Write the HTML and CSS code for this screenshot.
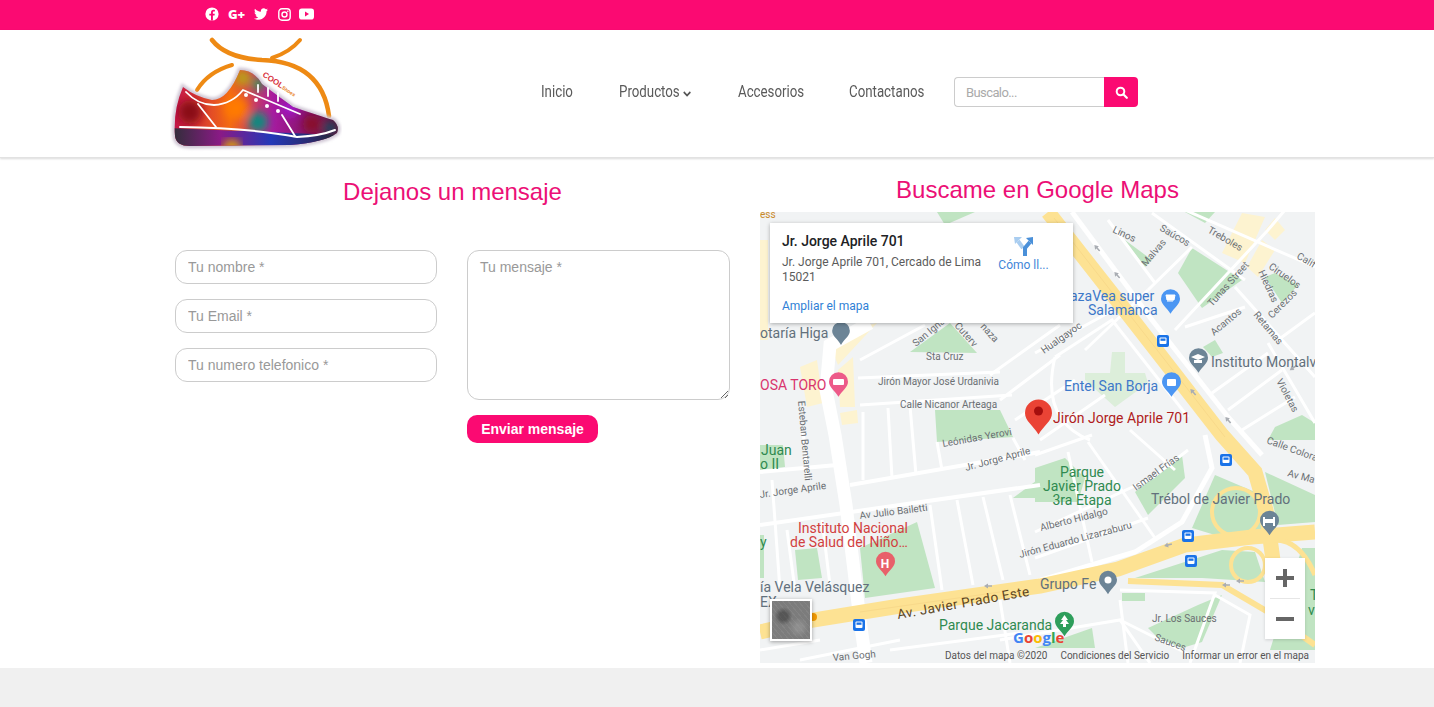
FILE: index.html
```html
<!DOCTYPE html>
<html lang="en">
<head>
    <meta charset="UTF-8">
    <meta name="viewport" content="width=device-width, initial-scale=1.0">
    <title>Contactanos</title>
    <link rel="stylesheet" href="styles.css">
</head>
<body>
    <!-- Top bar -->
    <div class="topbar">
        <svg class="social" width="14" height="14" viewBox="0 0 14 14"><circle cx="7" cy="7" r="6.6" fill="#fff"/><path d="M7.9 13.6V8.6h1.6l.3-1.9H7.9V5.5c0-.6.3-1 1-1h1V2.9c-.4-.1-.9-.1-1.400-.1-1.500 0-2.500.9-2.500 2.500v1.400H4.300v1.900H6v5z" fill="#fb0a72"/></svg>
        <span class="gplus">G+</span>
        <svg class="social" width="14" height="14" viewBox="0 0 512 512"><path fill="#fff" d="M459.37 151.716c.325 4.548.325 9.097.325 13.645 0 138.72-105.583 298.558-298.558 298.558-59.452 0-114.68-17.219-161.137-47.106 8.447.974 16.568 1.299 25.34 1.299 49.055 0 94.213-16.568 130.274-44.832-46.132-.975-84.792-31.188-98.112-72.772 6.498.974 12.995 1.624 19.818 1.624 9.421 0 18.843-1.3 27.614-3.573-48.081-9.747-84.143-51.98-84.143-102.985v-1.299c13.969 7.797 30.214 12.67 47.431 13.319-28.264-18.843-46.781-51.005-46.781-87.391 0-19.492 5.197-37.36 14.294-52.954 51.655 63.675 129.3 105.258 216.365 109.807-1.624-7.797-2.599-15.918-2.599-24.04 0-57.828 46.782-104.934 104.934-104.934 30.213 0 57.502 12.67 76.67 33.137 23.715-4.548 46.456-13.32 66.599-25.34-7.798 24.366-24.366 44.833-46.132 57.827 21.117-2.273 41.584-8.122 60.426-16.243-14.292 20.791-32.161 39.308-52.628 54.253z"/></svg>
        <svg class="social" width="13" height="13" viewBox="0 0 13 13"><rect x=".8" y=".8" width="11.400" height="11.400" rx="3.200" fill="none" stroke="#fff" stroke-width="1.400"/><circle cx="6.500" cy="6.500" r="2.500" fill="none" stroke="#fff" stroke-width="1.400"/><circle cx="9.800" cy="3.200" r=".8" fill="#fff"/></svg>
        <svg class="social yt" width="15" height="12" viewBox="0 0 15 12"><rect y=".5" width="15" height="11" rx="2.800" fill="#fff"/><path d="M6 3.500v5l4-2.500z" fill="#fb0a72"/></svg>
    </div>

    <!-- Header -->
    <header class="header">
        <svg class="logo" width="172" height="118" viewBox="170 35 172 118">
            <defs>
                <linearGradient id="shoeBase" x1="0" y1="0" x2="1" y2="0">
                    <stop offset="0" stop-color="#c00d50"/>
                    <stop offset=".35" stop-color="#f36a12"/>
                    <stop offset=".6" stop-color="#a81aa0"/>
                    <stop offset="1" stop-color="#5f1030"/>
                </linearGradient>
                <linearGradient id="soleBase" x1="0" y1="0" x2="1" y2="0">
                    <stop offset="0" stop-color="#2b2f34"/>
                    <stop offset=".3" stop-color="#8a1a86"/>
                    <stop offset=".6" stop-color="#2438b8"/>
                    <stop offset=".85" stop-color="#2a2a6a"/>
                    <stop offset="1" stop-color="#25282f"/>
                </linearGradient>
                <filter id="soft"><feGaussianBlur stdDeviation="4"/></filter>
                <filter id="halo"><feGaussianBlur stdDeviation="1.500"/></filter>
                <clipPath id="shoeClip"><path d="M183 87Q196 97 212 100Q228 100 240 70Q254 70 262 84L293 107Q320 116 333 120Q340 126 337 133Q325 142 290 145L190 146Q176 146 175 136Q173 110 183 87Z"/></clipPath>
            </defs>
            <g fill="none" stroke="#ee8a14" stroke-linecap="round">
                <path d="M212 40Q226 58 262 60Q322 62 329 116" stroke-width="4.500"/>
                <path d="M300 40Q290 52 272 58" stroke-width="4"/>
                <path d="M232 65Q208 72 197 90" stroke-width="4"/>
            </g>
            <path d="M183 87Q196 97 212 100Q228 100 240 70Q254 70 262 84L293 107Q320 116 333 120Q340 126 337 133Q325 142 290 145L190 146Q176 146 175 136Q173 110 183 87Z" fill="none" stroke="#cfc6d4" stroke-width="5" filter="url(#halo)"/>
            <g clip-path="url(#shoeClip)">
                <rect x="170" y="65" width="172" height="85" fill="url(#shoeBase)"/>
                <g filter="url(#soft)">
                    <circle cx="190" cy="112" r="12" fill="#8a0a12"/>
                    <circle cx="236" cy="108" r="12" fill="#ff7a00"/>
                    <circle cx="243" cy="78" r="8" fill="#b7a012"/>
                    <circle cx="258" cy="84" r="6" fill="#22a050"/>
                    <circle cx="258" cy="122" r="10" fill="#0e8a80"/>
                    <circle cx="290" cy="108" r="9" fill="#a012c8"/>
                    <circle cx="312" cy="124" r="9" fill="#8a0e2a"/>
                    <circle cx="330" cy="128" r="7" fill="#1c4a60"/>
                </g>
                <path d="M170 128L338 135V150H170Z" fill="url(#soleBase)"/>
                <circle cx="232" cy="148" r="9" fill="#d89a10" filter="url(#soft)"/>
            </g>
            <g fill="none" stroke="#fff" stroke-width="1.800" stroke-linecap="round">
                <path d="M180 127Q250 128 297 137Q320 136 335 130" stroke-width="2"/>
                <path d="M186 92Q198 105 214 105Q232 104 243 90L300 114"/>
                <path d="M198 104L216 127M282 115L295 136M258 92V85M268 96V88M278 101V93"/>
            </g>
            <g fill="#fff"><circle cx="246" cy="95" r="2"/><circle cx="256" cy="100" r="2"/><circle cx="267" cy="106" r="2"/><circle cx="278" cy="111" r="2"/></g>
            <text class="logo-cool" transform="translate(262 76) rotate(33)">COOL<tspan class="logo-shoes">Shoes</tspan></text>
        </svg>
        <nav class="nav">
            <a href="#">Inicio</a>
            <a href="#">Productos <svg width="10" height="6" viewBox="0 0 10 6"><path d="M1 1l4 3.500L9 1" fill="none" stroke="#555" stroke-width="1.800"/></svg></a>
            <a href="#">Accesorios</a>
            <a href="#">Contactanos</a>
        </nav>
        <form class="search">
            <input type="text" placeholder="Buscalo...">
            <button type="button"><svg width="13" height="13" viewBox="0 0 13 13"><circle cx="5.500" cy="5.500" r="3.800" fill="none" stroke="#fff" stroke-width="2"/><path d="M8.500 8.500l3.300 3.300" stroke="#fff" stroke-width="2.200" stroke-linecap="round"/></svg></button>
        </form>
    </header>

    <!-- Content -->
    <main class="content">
        <section class="message">
            <h2>Dejanos un mensaje</h2>
            <form class="contact-form">
                <div class="fields">
                    <input type="text" placeholder="Tu nombre *">
                    <input type="text" placeholder="Tu Email *">
                    <input type="text" placeholder="Tu numero telefonico *">
                </div>
                <div class="text-side">
                    <textarea placeholder="Tu mensaje *"></textarea>
                    <button type="button" class="send-btn">Enviar mensaje</button>
                </div>
            </form>
        </section>

        <section class="location">
            <h2>Buscame en Google Maps</h2>
            <div class="map">
                <svg class="map-canvas" width="555" height="451" viewBox="760 212 555 451">
                    <defs>
                        <symbol id="pin" viewBox="0 0 20 26" overflow="visible"><path d="M10 0a10 10 0 0 1 10 10c0 6-6 9-10 16C6 19 0 16 0 10A10 10 0 0 1 10 0z"/></symbol>
                        <g id="bus"><rect x="-6" y="-6" width="12" height="12" rx="2" fill="#1a73e8"/><rect x="-3.500" y="-3.500" width="7" height="6.500" rx="1" fill="#fff"/><rect x="-2.500" y="-2.500" width="5" height="2.300" fill="#1a73e8"/></g>
                        <path id="arrow" d="M-4 0L0 -2.500V-.8H4V.8H0V2.500Z" fill="#a9adb3"/>
                    </defs>
                    <rect x="760" y="212" width="555" height="451" fill="#f1f3f4"/>

                    <!-- parks -->
                    <g fill="#c0e4c2">
                        <path d="M1178 273L1192 248L1242 280L1202 308Z"/>
                        <path d="M1125 240L1152 260L1145 267Z"/>
                        <path d="M1265 277L1275 273L1298 285L1282 303Z"/>
                        <path d="M1203 347L1215 340L1223 353L1212 357Z"/>
                        <path d="M1275 427L1302 415L1315 423V440H1268Z"/>
                        <path d="M1185 212H1215L1205 223Z"/>
                        <path d="M910 352L950 323L977 353Z"/>
                        <path d="M935 410H1000L1013 437L937 442Z"/>
                        <path d="M860 548L917 522L935 588L865 598Z"/>
                        <path d="M795 550L817 548L822 578L798 580Z"/>
                        <path d="M760 445H783L785 467L760 470Z"/>
                        <path d="M760 535H764V578H760Z"/>
                        <path d="M1013 498L1040 478V498Z"/>
                        <path d="M1035 468L1065 458L1085 478L1078 502H1035Z"/>
                        <path d="M1135 492L1182 455L1185 478L1148 515Z"/>
                        <path d="M1192 528L1215 475L1255 492L1262 532L1215 535Z"/>
                        <path d="M1265 472L1315 495V522L1278 525Z"/>
                        <path d="M1135 578L1222 550L1255 552L1265 582L1202 578Z"/>
                        <path d="M1122 593H1145V601H1122Z"/>
                        <path d="M1148 628L1198 605L1222 595L1202 642L1182 648L1158 638Z"/>
                        <path d="M1035 648L1092 628L1095 648Z"/>
                        <path d="M1302 548H1315V650H1270Z"/>
                        <path d="M937 212H975L945 225Z"/>
                    </g>
                    <path d="M1112 352H1125V373H1145L1148 383L1115 407L1085 380V373H1110Z" fill="#dceeda"/>
                    <g fill="#fdf3d0">
                        <path d="M1222 253L1242 213L1265 217L1245 263Z"/>
                        <path d="M1265 230L1275 218L1285 230L1275 240Z"/>
                        <path d="M1247 267L1262 240L1275 250L1258 277Z"/>
                        <path d="M832 350L860 327L877 323L838 365Z"/>
                        <path d="M800 367L817 360L823 403L807 407Z"/>
                        <path d="M838 370L853 357L855 407L840 407Z"/>
                        <path d="M840 413L857 410L858 423L842 425Z"/>
                        <path d="M760 240H768V340H760Z"/>
                    </g>

                    <!-- streets -->
                    <g fill="none" stroke="#fff" stroke-width="3">
                        <path d="M1072 212L1152 320L1228 417L1262 455" stroke-width="5"/>
                        <path d="M1108 220L1155 283M1152 213L1245 280M1185 210L1315 267M1175 330L1268 230L1285 210"/>
                        <path d="M1148 290L1192 247M1235 287L1315 377M1185 327L1245 307M1268 343L1315 423"/>
                        <path d="M1212 393L1268 353M1228 410L1282 370M1242 430L1295 397M1278 340L1315 313"/>
                        <path d="M1035 353L1108 313M1055 357L1112 320L1188 417M1148 290L1085 350"/>
                        <path d="M1205 435L1212 468L1182 522L1135 552L1035 582" stroke-width="5"/>
                        <path d="M1035 455L1092 435M1088 442L1155 538M1068 452L1092 562M1035 532L1152 478M1035 558L1148 518M1152 478L1188 450"/>
                        <path d="M1055 357Q1040 420 1090 440M1015 420L1075 380M1040 440L1105 395M1130 430L1175 470"/>
                        <path d="M860 360L925 325M990 375L1060 325M1000 400L1060 355"/>
                        <path d="M858 378L1000 372M860 405L1012 395"/>
                        <path d="M760 525L1040 485M760 472L837 465M850 485L1040 452" stroke-width="4"/>
                        <path d="M863 412V480M888 408L892 478M910 406L916 475M937 442L942 470M1013 438L1025 460"/>
                        <path d="M930 505L942 590M957 500L973 585M983 497L1003 580M1010 495L1030 575"/>
                        <path d="M803 430L808 480M772 480L780 590M787 530L795 590M822 520L830 585"/>
                        <path d="M760 650L820 640M890 650L1020 633M800 660L900 640M1000 600L1010 663"/>
                        <path d="M1120 590L1215 593L1190 663M1000 640L1120 620L1150 663M1120 600L1128 663M1120 620L1190 655M1215 595L1250 615L1240 663"/>
                    </g>
                    <path d="M870 323L830 345L826 390L835 435L846 505L860 620L866 663" fill="none" stroke="#fff" stroke-width="13"/>

                    <!-- main avenues -->
                    <g fill="none" stroke="#fde293" stroke-linecap="butt">
                        <path d="M1048 212L1135 323L1222 435L1255 472L1266 510L1273 560" stroke-width="15"/>
                        <path d="M760 632L813 620L900 606L1040 586L1118 569L1185 545L1252 537L1315 532" stroke-width="15"/>
                        <path d="M1128 581L1222 585L1268 612L1315 645" stroke-width="6"/>
                        <circle cx="1236" cy="512" r="24" stroke-width="4"/>
                        <circle cx="1248" cy="565" r="17" stroke-width="4"/>
                        <path d="M1275 540Q1300 540 1315 575" stroke-width="5"/>
                    </g>
                    <path d="M1054 218L1225 437M860 612L1000 592" fill="none" stroke="#f8d98a" stroke-width="1"/>
                    <circle cx="813" cy="617" r="4" fill="#f29900"/>

                    <use href="#arrow" transform="translate(1097 248) rotate(48)"/>
                    <use href="#arrow" transform="translate(1117 275) rotate(48)"/>
                    <use href="#arrow" transform="translate(1193 392) rotate(48)"/>
                    <use href="#arrow" transform="translate(1228 420) rotate(48)"/>
                    <use href="#arrow" transform="translate(988 586)"/>
                    <use href="#arrow" transform="translate(1168 545) rotate(-15)"/>
                    <use href="#arrow" transform="translate(1240 581)"/>
                    <use href="#arrow" transform="translate(1226 585)"/>
                    <use href="#arrow" transform="translate(1293 368) rotate(-35)"/>

                    <!-- street labels -->
                    <g class="st">
                        <text x="878" y="385">Jirón Mayor José Urdanivia</text>
                        <text x="900" y="408">Calle Nicanor Arteaga</text>
                        <text x="926" y="360">Sta Cruz</text>
                        <text transform="translate(916 347) rotate(-40)">San Igna</text>
                        <text transform="translate(954 326) rotate(48)">Cuterv</text>
                        <text transform="translate(980 327) rotate(48)">naza</text>
                        <text transform="translate(1044 354) rotate(-35)">Hualgayoc</text>
                        <text transform="translate(1112 232) rotate(25)">Linos</text>
                        <text transform="translate(1146 267) rotate(-50)">Malvas</text>
                        <text transform="translate(1159 230) rotate(30)">Saúcos</text>
                        <text transform="translate(1207 232) rotate(30)">Treboles</text>
                        <text transform="translate(1212 307) rotate(-48)">Tunas Street</text>
                        <text transform="translate(1268 268) rotate(35)">Ciruelos</text>
                        <text transform="translate(1258 272) rotate(65)">Hiedras</text>
                        <text transform="translate(1272 319) rotate(-45)">Cerezos</text>
                        <text transform="translate(1296 258) rotate(30)">Calif</text>
                        <text transform="translate(1253 315) rotate(50)">Retamas</text>
                        <text transform="translate(1214 336) rotate(-40)">Acantos</text>
                        <text transform="translate(1276 381) rotate(62)">Violetas</text>
                        <text transform="translate(1266 443) rotate(20)">Calle Colora</text>
                        <text transform="translate(1287 476) rotate(15)">Av Ma</text>
                        <text transform="translate(943 447) rotate(-10)">Leónidas Yerovi</text>
                        <text transform="translate(966 471) rotate(-15)">Jr. Jorge Aprile</text>
                        <text transform="translate(760 498) rotate(-8)">Jr. Jorge Aprile</text>
                        <text transform="translate(798 401) rotate(85)">Esteban Bentarelli</text>
                        <text transform="translate(860 519) rotate(-7)">Av Julio Bailetti</text>
                        <text transform="translate(1136 491) rotate(-36)">Ismael Frías</text>
                        <text transform="translate(1041 531) rotate(-14)">Alberto Hidalgo</text>
                        <text transform="translate(1020 558) rotate(-15)">Jirón Eduardo Lizarzaburu</text>
                        <text transform="translate(833 661) rotate(-5)">Van Gogh</text>
                        <text x="1152" y="622">Jr. Los Sauces</text>
                        <text transform="translate(1154 640) rotate(20)">Sauces</text>
                    </g>

                    <!-- places -->
                    <g class="poi poi-gray">
                        <text x="760" y="338">otaría Higa</text>
                        <text x="1211" y="367">Instituto Montalv</text>
                        <text x="1151" y="504">Trébol de Javier Prado</text>
                        <text x="760" y="592">ía Vela Velásquez</text>
                        <text x="760" y="607">EX</text>
                        <text x="1040" y="589">Grupo Fe</text>
                    </g>
                    <g class="poi poi-blue">
                        <text x="1070" y="301">azaVea super</text>
                        <text x="1088" y="315">Salamanca</text>
                        <text x="1064" y="391">Entel San Borja</text>
                    </g>
                    <g class="poi poi-green">
                        <text x="1082" y="477" text-anchor="middle">Parque</text>
                        <text x="1082" y="491" text-anchor="middle">Javier Prado</text>
                        <text x="1082" y="505" text-anchor="middle">3ra Etapa</text>
                        <text x="939" y="630">Parque Jacaranda</text>
                        <text x="761" y="455">Juan</text>
                        <text x="760" y="469">o II</text>
                        <text x="760" y="547">y</text>
                        <text x="1310" y="600">T</text>
                        <text x="1308" y="615">vi</text>
                    </g>
                    <g class="poi poi-red">
                        <text x="853" y="533" text-anchor="middle">Instituto Nacional</text>
                        <text x="849" y="547" text-anchor="middle">de Salud del Niño…</text>
                    </g>
                    <text class="poi poi-pink" x="760" y="390">OSA TORO</text>
                    <text class="poi poi-dark" x="1053" y="423">Jirón Jorge Aprile 701</text>
                    <text class="poi poi-road" transform="translate(898 619) rotate(-10)">Av. Javier Prado Este</text>
                    <text class="st poi-orange" x="760" y="218">ess</text>

                    <!-- pins -->
                    <use href="#pin" x="832" y="322" width="18" height="23" fill="#6c8496"/>
                    <use href="#pin" x="829" y="372" width="19" height="25" fill="#ed5a89"/>
                    <rect x="833" y="379" width="11" height="6" rx="1" fill="#fff"/>
                    <use href="#pin" x="1161" y="289" width="19" height="25" fill="#4b96f3"/>
                    <path d="M1166 295h9l-1 5h-7zM1167 301h6" fill="#fff" stroke="#fff"/>
                    <use href="#pin" x="1162" y="372" width="19" height="25" fill="#4b96f3"/>
                    <rect x="1167" y="379" width="9" height="7" rx="1" fill="#fff"/>
                    <use href="#pin" x="1189" y="348" width="19" height="25" fill="#6c8496"/>
                    <path d="M1191 357l7-3 7 3-7 3zM1194 360v3h8v-3" fill="#fff"/>
                    <use href="#pin" x="1025" y="398" width="27" height="38" fill="#ea4335"/>
                    <circle cx="1038.500" cy="411" r="4.500" fill="#a50e0e"/>
                    <use href="#pin" x="876" y="551" width="19" height="26" fill="#e8606a"/>
                    <text class="pin-h" x="885" y="568" text-anchor="middle">H</text>
                    <use href="#pin" x="1260" y="510" width="19" height="26" fill="#6c8496"/>
                    <path d="M1263 517h2v2h8v-2h2v9h-2v-3h-8v3h-2z" fill="#fff"/>
                    <use href="#pin" x="1099" y="570" width="18" height="25" fill="#6c8496"/>
                    <circle cx="1108" cy="580" r="3.500" fill="#fff"/>
                    <use href="#pin" x="1055" y="611" width="19" height="26" fill="#2e9e5b"/>
                    <path d="M1064.500 615l3.500 5h-2l3 4h-3v3h-3v-3h-3l3-4h-2z" fill="#fff"/>

                    <use href="#bus" x="1163" y="341"/>
                    <use href="#bus" x="1226" y="460"/>
                    <use href="#bus" x="1188" y="536"/>
                    <use href="#bus" x="1191" y="561"/>
                    <use href="#bus" x="859" y="625"/>

                    <text class="g-logo" x="1013" y="643"><tspan fill="#4285f4">G</tspan><tspan fill="#ea4335">o</tspan><tspan fill="#fbbc05">o</tspan><tspan fill="#4285f4">g</tspan><tspan fill="#34a853">l</tspan><tspan fill="#ea4335">e</tspan></text>
                </svg>

                <!-- overlays on the map -->
                <div class="info-card">
                    <div class="info-main">
                        <div class="info-title">Jr. Jorge Aprile 701</div>
                        <div class="info-addr">Jr. Jorge Aprile 701, Cercado de Lima 15021</div>
                        <a class="info-link" href="#">Ampliar el mapa</a>
                    </div>
                    <a class="info-dir" href="#">
                        <svg width="20" height="21" viewBox="0 0 20 21"><path d="M9 12L4 5" fill="none" stroke="#a9cdf0" stroke-width="4"/><path d="M0 1h8L1 8z" fill="#a9cdf0"/><path d="M11 20V12L16 6" fill="none" stroke="#4a90d9" stroke-width="4"/><path d="M19 1v8l-7-7z" fill="#4a90d9"/></svg>
                        <span>Cómo ll...</span>
                    </a>
                </div>
                <div class="sat-thumb"></div>
                <div class="zoom-ctrl">
                    <div class="zoom-btn"><svg width="18" height="18" viewBox="0 0 18 18"><path d="M9 0v18M0 9h18" stroke="#666" stroke-width="4"/></svg></div>
                    <div class="zoom-btn"><svg width="18" height="18" viewBox="0 0 18 18"><path d="M0 9h18" stroke="#666" stroke-width="4"/></svg></div>
                </div>
                <div class="attribution">
                    <span>Datos del mapa ©2020</span>
                    <span>Condiciones del Servicio</span>
                    <span>Informar un error en el mapa</span>
                </div>
            </div>
        </section>
    </main>

    <div class="page-end"></div>
</body>
</html>
```

FILE: styles.css
```css
/* Base */
body {
    margin: 0;
    padding: 0;
    background-color: #f0f0f0;
    font-family: 'Liberation Sans', Arial, sans-serif;
}

/* Top bar */
.topbar {
    height: 30px;
    box-sizing: border-box;
    padding: 0 0 2px 205px;
    background-color: #fb0a72;
    display: flex;
    align-items: center;
    gap: 10px;
}

.social {
    flex: none;
}

.social.yt {
    margin-left: -2px;
}

.gplus {
    color: #fff;
    font-family: 'Open Sans', sans-serif;
    font-size: 13px;
    font-weight: 800;
    line-height: 14px;
    margin: 0 -1px 0 -1px;
}

/* Header */
.header {
    height: 128px;
    box-sizing: border-box;
    background-color: #fff;
    border-bottom: 1px solid #e2e2e2;
    box-shadow: 0 1px 2px rgba(0, 0, 0, 0.15);
    position: relative;
    display: flex;
    align-items: center;
    padding-left: 170px;
}

.logo {
    flex: none;
    align-self: flex-start;
    margin-top: 5px;
}

.logo-cool {
    font-family: 'Liberation Sans', Arial, sans-serif;
    font-size: 8px;
    font-weight: 700;
    fill: #d8323c;
}

.logo-shoes {
    font-size: 5px;
    fill: #e8801a;
}

.nav {
    display: grid;
    grid-template-columns: 33px 74px 66px 76px;
    column-gap: 45px;
    margin-left: 199px;
    margin-top: -4px;
}

/* no condensed font here, so the text is squeezed */
.nav a {
    display: block;
    color: #5a5a5a;
    text-decoration: none;
    font-family: 'Roboto', sans-serif;
    font-size: 16px;
    white-space: nowrap;
    transform: scaleX(0.83);
    transform-origin: left center;
}

.search {
    display: flex;
    margin-left: 29px;
    margin-top: -3px;
}

.search input {
    width: 150px;
    height: 30px;
    box-sizing: border-box;
    border: 1px solid #ccc;
    border-right: 0;
    border-radius: 4px 0 0 4px;
    padding: 0 11px;
    font-family: 'Roboto', sans-serif;
    font-size: 13px;
    letter-spacing: -0.6px;
    outline: none;
}

.search input::placeholder {
    color: #aaa;
}

.search button {
    width: 34px;
    height: 30px;
    border: 0;
    padding: 0;
    background-color: #fb0a72;
    border-radius: 0 4px 4px 0;
    display: flex;
    align-items: center;
    justify-content: center;
}

/* Content */
.content {
    height: 510px;
    background-color: #fff;
    display: grid;
    grid-template-columns: 555px 555px;
    column-gap: 30px;
    padding-left: 175px;
}

h2 {
    margin: 0;
    font-size: 24px;
    font-weight: 400;
    line-height: 28px;
    color: #ec0f76;
    text-align: center;
}

.message h2 {
    margin-top: 20px;
}

.location h2 {
    margin-top: 18px;
}

/* Contact form */
.contact-form {
    display: flex;
    gap: 30px;
    margin-top: 44px;
}

.fields {
    width: 262px;
    display: flex;
    flex-direction: column;
    gap: 15px;
}

.text-side {
    width: 263px;
}

.fields input,
.text-side textarea {
    display: block;
    box-sizing: border-box;
    width: 100%;
    border: 1px solid #ccc;
    border-radius: 12px;
    padding: 0 12px;
    font-family: 'Liberation Sans', Arial, sans-serif;
    font-size: 14px;
    outline: none;
    background: #fff;
}

.fields input {
    height: 34px;
}

.text-side textarea {
    height: 150px;
    padding-top: 8px;
}

input::placeholder,
textarea::placeholder {
    color: #999;
    opacity: 1;
}

.send-btn {
    display: block;
    margin-top: 15px;
    width: 131px;
    height: 28px;
    border: 0;
    border-radius: 10px;
    padding: 0;
    background-color: #fb0a72;
    color: #fff;
    font-family: 'Liberation Sans', Arial, sans-serif;
    font-size: 14px;
    font-weight: 700;
}

/* Map */
.map {
    position: relative;
    width: 555px;
    height: 451px;
    margin-top: 8px;
    overflow: hidden;
    font-family: 'Roboto', sans-serif;
}

.map-canvas {
    display: block;
}

.st {
    font-family: 'Roboto', sans-serif;
    font-size: 10px;
    fill: #6b6f73;
}

.poi {
    font-family: 'Roboto', sans-serif;
    font-size: 14px;
}

.poi-gray { fill: #62707c; }
.poi-blue { fill: #3d78c9; }
.poi-green { fill: #2f8a50; }
.poi-red { fill: #d23f3f; }
.poi-pink { fill: #d9346e; }
.poi-dark { fill: #b01c1c; }
.poi-orange { fill: #c98a2a; }

.poi-road {
    fill: #5c4522;
    font-size: 13.5px;
    letter-spacing: 0.4px;
}

.pin-h {
    font-family: 'Roboto', sans-serif;
    font-size: 12px;
    font-weight: 700;
    fill: #fff;
}

.g-logo {
    font-family: 'Open Sans', sans-serif;
    font-size: 15px;
    font-weight: 700;
}

.info-card {
    position: absolute;
    left: 10px;
    top: 11px;
    width: 303px;
    height: 100px;
    box-sizing: border-box;
    padding: 10px 12px;
    background-color: #fff;
    box-shadow: 0 1px 4px rgba(0, 0, 0, 0.3);
    display: flex;
}

.info-main {
    width: 205px;
}

.info-title {
    font-size: 14px;
    font-weight: 500;
    line-height: 17px;
    color: #202124;
}

.info-addr {
    margin-top: 5px;
    font-size: 12px;
    line-height: 15px;
    color: #5b5b5b;
}

.info-link {
    display: block;
    margin-top: 14px;
    font-size: 12px;
    line-height: 15px;
    color: #2f7fd6;
    text-decoration: none;
}

.info-dir {
    margin-left: 12px;
    width: 49px;
    display: flex;
    flex-direction: column;
    align-items: center;
    color: #3f86d8;
    font-size: 12px;
    line-height: 15px;
    text-decoration: none;
    white-space: nowrap;
}

.info-dir svg {
    margin-top: 3px;
    margin-bottom: 1px;
}

.sat-thumb {
    position: absolute;
    left: 10px;
    top: 387px;
    width: 42px;
    height: 42px;
    box-sizing: border-box;
    border: 2px solid #fff;
    background:
        radial-gradient(circle at 30% 40%, rgba(40, 40, 40, 0.45) 0 4px, transparent 9px),
        radial-gradient(circle at 70% 70%, rgba(170, 170, 170, 0.4) 0 3px, transparent 10px),
        repeating-linear-gradient(50deg, rgba(255, 255, 255, 0.06) 0 1px, transparent 1px 4px),
        #7c7c7c;
    box-shadow: 0 1px 4px rgba(0, 0, 0, 0.35);
}

.zoom-ctrl {
    position: absolute;
    left: 505px;
    top: 346px;
    width: 40px;
    height: 81px;
    background-color: #fff;
    box-shadow: 0 1px 3px rgba(0, 0, 0, 0.15);
    display: flex;
    flex-direction: column;
}

.zoom-btn {
    flex: 1;
    display: flex;
    align-items: center;
    justify-content: center;
}

.zoom-btn + .zoom-btn {
    border-top: 1px solid #e6e6e6;
    margin: 0 5px;
}

.attribution {
    position: absolute;
    right: 0;
    bottom: 0;
    height: 14px;
    padding-right: 6px;
    display: flex;
    gap: 13px;
    font-size: 10px;
    line-height: 14px;
    color: #555;
}

.page-end {
    height: 39px;
}
```
